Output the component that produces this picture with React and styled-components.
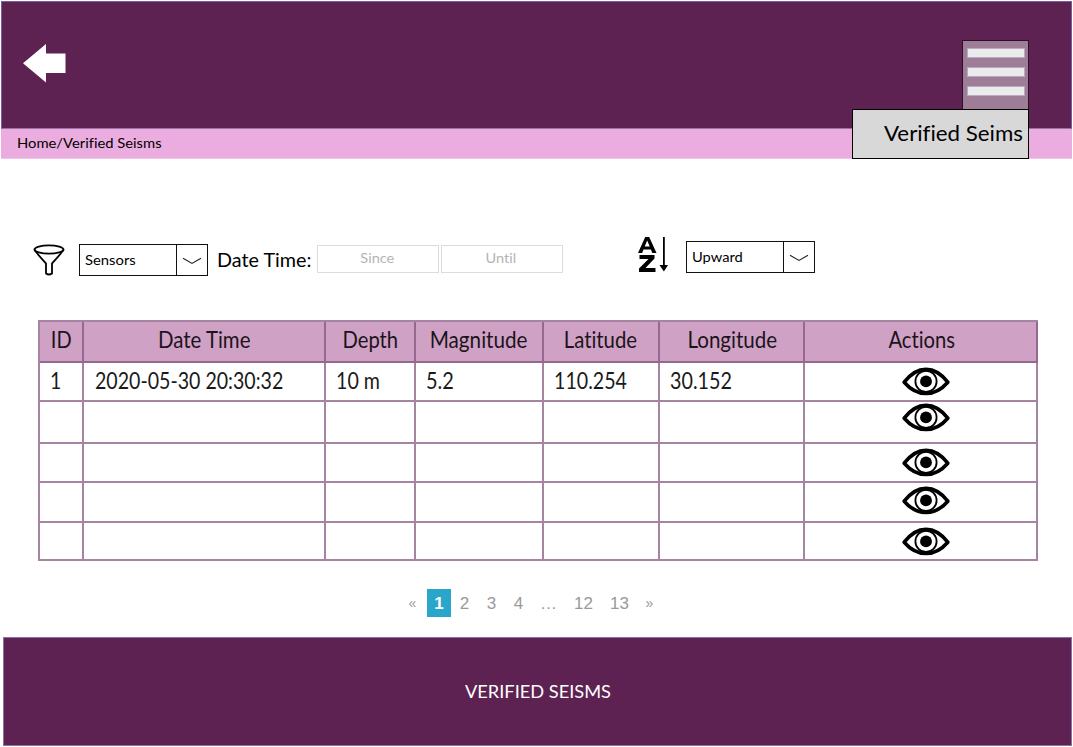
import React from "react";
import styled, { createGlobalStyle } from "styled-components";

const plum = "#5d2251";
const line = "#a584a2";

const GlobalStyle = createGlobalStyle`
  * { box-sizing: border-box; }
  body {
    margin: 0;
    background: #fff;
    color: #000;
    font-family: Lato, "Liberation Sans", sans-serif;
    font-variant-ligatures: none;
  }
`;

const Page = styled.div`
  width: 1073px;
  height: 747px;
  padding: 1px 1px 0;
  display: flex;
  flex-direction: column;
  overflow: hidden;
`;

const Text = styled.span`
  display: inline-block;
  white-space: nowrap;
  font-size: ${(p) => p.$size}px;
  line-height: 1.2;
  transform: scaleX(${(p) => p.$fit || 1});
  transform-origin: ${(p) => p.$origin || "left"} center;
`;

const Header = styled.header`
  position: relative;
  width: 1071px;
  height: 128px;
  flex: none;
  padding: 42px 0 0 21px;
  background: ${plum};
  border: 1px solid #7b5f98;
  border-bottom-color: #9a70a8;
`;

const BackArrow = styled.svg`
  display: block;
`;

const Menu = styled.nav`
  position: absolute;
  z-index: 1;
  top: 38px;
  right: 42px;
  display: flex;
  flex-direction: column;
  align-items: flex-end;
`;

const MenuButton = styled.div`
  width: 67px;
  height: 69px;
  padding: 7px 3px 0 4px;
  display: flex;
  flex-direction: column;
  gap: 9px;
  background: #9e7e97;
  border: 1px solid #2b1027;
  border-bottom: 0;
`;

const MenuBar = styled.i`
  height: 10px;
  flex: none;
  background: #ebebeb;
  border: 1px solid #b9a9c6;
`;

const MenuItem = styled.div`
  width: 177px;
  height: 50px;
  padding: 11px 5px 0 0;
  display: flex;
  justify-content: flex-end;
  align-items: flex-start;
  background: #d8d8d8;
  border: 1px solid #000;
`;

const Breadcrumb = styled.div`
  width: 1071px;
  height: 30px;
  flex: none;
  padding: 3px 16px 0;
  background: #ebacdf;
  border-bottom: 1px solid #f0c6e8;
`;

const Toolbar = styled.section`
  height: 161px;
  flex: none;
  display: flex;
  align-items: flex-start;
  padding: 78px 0 0 32px;
`;

const FunnelIcon = styled.svg`
  flex: none;
  margin: 7px 14px 0 0;
`;

const SortIcon = styled.svg`
  flex: none;
  margin: -1px 16px 0 73px;
`;

const Select = styled.div`
  width: 129px;
  height: 32px;
  flex: none;
  margin-top: ${(p) => p.$drop}px;
  display: flex;
  border: 1px solid #111;
`;

const SelectValue = styled.div`
  flex: 1;
  padding: 4px 0 0 5px;
`;

const SelectArrow = styled.div`
  width: 31px;
  padding-top: 2px;
  display: grid;
  place-items: center;
  border-left: 1px solid #111;
`;

const FieldLabel = styled.div`
  width: 100px;
  flex: none;
  margin: 12px 0 0 9px;
`;

const DateField = styled.div`
  width: 122px;
  height: 28px;
  flex: none;
  margin: 8px 2px 0 0;
  padding: 1px 2px 0 0;
  text-align: center;
  color: #b4b4b4;
  border: 1px solid #dcdcdc;
`;

const Table = styled.div`
  width: 1000px;
  flex: none;
  margin-left: 37px;
  border: solid ${line};
  border-width: 2px 0 0 2px;
`;

const Row = styled.div`
  display: grid;
  grid-template-columns: 44px 242px 90px 128px 116px 145px 233px;
  height: ${(p) => p.$height}px;
`;

const HeadCell = styled.div`
  padding: 3px ${(p) => Math.max(0, -p.$nudge)}px 0 ${(p) => Math.max(0, p.$nudge)}px;
  text-align: center;
  color: #1c131b;
  background: #cfa1c5;
  border: solid #986790;
  border-width: 0 2px 2px 0;
`;

const Cell = styled.div`
  padding: 3px 0 0 ${(p) => p.$inset || 0}px;
  color: #1a1a1a;
  border: solid ${line};
  border-width: 0 2px 2px 0;
`;

const EyeIcon = styled.svg`
  display: block;
  margin: ${(p) => p.$top}px 0 0 96.5px;
`;

const Pagination = styled.nav`
  height: 76px;
  flex: none;
  padding: 28px 0 0 402px;
  display: flex;
  font-family: "Liberation Sans", sans-serif;
`;

const PageLink = styled.span`
  width: ${(p) => p.$width}px;
  height: 28px;
  line-height: 29px;
  text-align: center;
  font-size: ${(p) => (p.$arrow ? 14 : 17)}px;
  color: ${(p) => (p.$current ? "#fff" : "#999")};
  background: ${(p) => (p.$current ? "#2ba6cb" : "none")};
  font-weight: ${(p) => (p.$current ? 700 : 400)};
`;

const Footer = styled.footer`
  width: 1069px;
  height: 109px;
  flex: none;
  margin-left: 2px;
  padding: 43px 0 0 461px;
  color: #fff;
  background: ${plum};
  border: 1px solid #8b74a5;
`;

const Chevron = () => (
  <svg width="20" height="8" viewBox="0 0 20 8" fill="none" stroke="#222" strokeWidth="1.1">
    <path d="M1 1.2 10 6.4 19 1.2" />
  </svg>
);

const Eye = ({ top }) => (
  <EyeIcon $top={top} width="48" height="30" viewBox="0 0 48 30">
    <path d="M2.2 15.2C8.5 7 15.7 2.4 24 2.4S39.5 7 45.8 15.2C39.5 22.500 32.3 26.500 24 26.500S8.5 22.500 2.2 15.2Z" fill="#fff" stroke="#000" strokeWidth="3.6" strokeLinejoin="round" />
    <circle cx="24" cy="14.4" r="10.6" fill="none" stroke="#000" strokeWidth="1.8" />
    <circle cx="24" cy="14.4" r="5.9" />
  </EyeIcon>
);

const columns = [
  ["ID", 0.85, 0], ["Date Time", 0.87, 0], ["Depth", 0.86, 0], ["Magnitude", 0.88, 0],
  ["Latitude", 0.865, -1], ["Longitude", 0.875, 1], ["Actions", 0.86, 2],
];
const values = [
  ["1", 0.83, 10], ["2020-05-30 20:30:32", 0.833, 11], ["10 m", 0.835, 10], ["5.2", 0.85, 10],
  ["110.254", 0.835, 10], ["30.152", 0.84, 10],
];
const emptyRows = [[42, -2], [39, 1], [40, 0], [38, 1]];

export default function App() {
  return (
    <>
      <GlobalStyle />
      <Page>
        <Header>
          <BackArrow width="43" height="40" viewBox="0 0 43 40">
            <path d="M0 19.3 23 0V9.5H42.5V29H23V38.5Z" fill="#fff" />
          </BackArrow>
          <Menu>
            <MenuButton><MenuBar /><MenuBar /><MenuBar /></MenuButton>
            <MenuItem><Text $size={21.5} $fit={1.038} $origin="right">Verified Seims</Text></MenuItem>
          </Menu>
        </Header>
        <Breadcrumb><Text $size={14} $fit={1.055}>Home/Verified Seisms</Text></Breadcrumb>
        <Toolbar>
          <FunnelIcon width="32" height="32" viewBox="0 0 32 32" fill="none" stroke="#000" strokeWidth="1.8" strokeLinejoin="round">
            <ellipse cx="16" cy="5.5" rx="14.5" ry="4.2" />
            <path d="M1.5 5.5C2.5 8.5 11.5 17.5 13 19.5V29.5Q16 31.5 19 29.5V19.5C20.5 17.5 29.5 8.5 30.5 5.5" />
          </FunnelIcon>
          <Select $drop={7}>
            <SelectValue><Text $size={14} $fit={1.06}>Sensors</Text></SelectValue>
            <SelectArrow><Chevron /></SelectArrow>
          </Select>
          <FieldLabel><Text $size={19} $fit={1.04}>Date Time:</Text></FieldLabel>
          <DateField><Text $size={14} $fit={1.04} $origin="center">Since</Text></DateField>
          <DateField><Text $size={14} $fit={1.04} $origin="center">Until</Text></DateField>
          <SortIcon width="32" height="38" viewBox="0 0 32 38">
            <path fillRule="evenodd" d="M0 17 7.2 1H11.2L18.5 17H14.3L12.9 13.6H5.5L4.1 17ZM6.7 10.5H11.7L9.2 4.5Z" />
            <path d="M1.5 19H16.5V22.5L7.5 32H17.5V36H1V32.5L10.5 23H1.5Z" />
            <path d="M25 1H26.8V29H30L25.9 35.5 21.5 29H25Z" />
          </SortIcon>
          <Select $drop={4}>
            <SelectValue><Text $size={14} $fit={1.05}>Upward</Text></SelectValue>
            <SelectArrow><Chevron /></SelectArrow>
          </Select>
        </Toolbar>
        <Table>
          <Row $height={41}>
            {columns.map(([name, fit, nudge]) => (
              <HeadCell key={name} $nudge={nudge}><Text $size={23.5} $fit={fit} $origin="center">{name}</Text></HeadCell>
            ))}
          </Row>
          <Row $height={39}>
            {values.map(([value, fit, inset]) => (
              <Cell key={value} $inset={inset}><Text $size={23.5} $fit={fit}>{value}</Text></Cell>
            ))}
            <Cell><Eye top={1} /></Cell>
          </Row>
          {emptyRows.map(([height, top], i) => (
            <Row key={i} $height={height}>
              <Cell /><Cell /><Cell /><Cell /><Cell /><Cell />
              <Cell><Eye top={top} /></Cell>
            </Row>
          ))}
        </Table>
        <Pagination>
          <PageLink $width={19} $arrow>«</PageLink>
          <PageLink $width={5} />
          <PageLink $width={24} $current>1</PageLink>
          <PageLink $width={27}>2</PageLink>
          <PageLink $width={27}>3</PageLink>
          <PageLink $width={27}>4</PageLink>
          <PageLink $width={33}>…</PageLink>
          <PageLink $width={37}>12</PageLink>
          <PageLink $width={35}>13</PageLink>
          <PageLink $width={25} $arrow>»</PageLink>
        </Pagination>
        <Footer><Text $size={18} $fit={1.012}>VERIFIED SEISMS</Text></Footer>
      </Page>
    </>
  );
}
